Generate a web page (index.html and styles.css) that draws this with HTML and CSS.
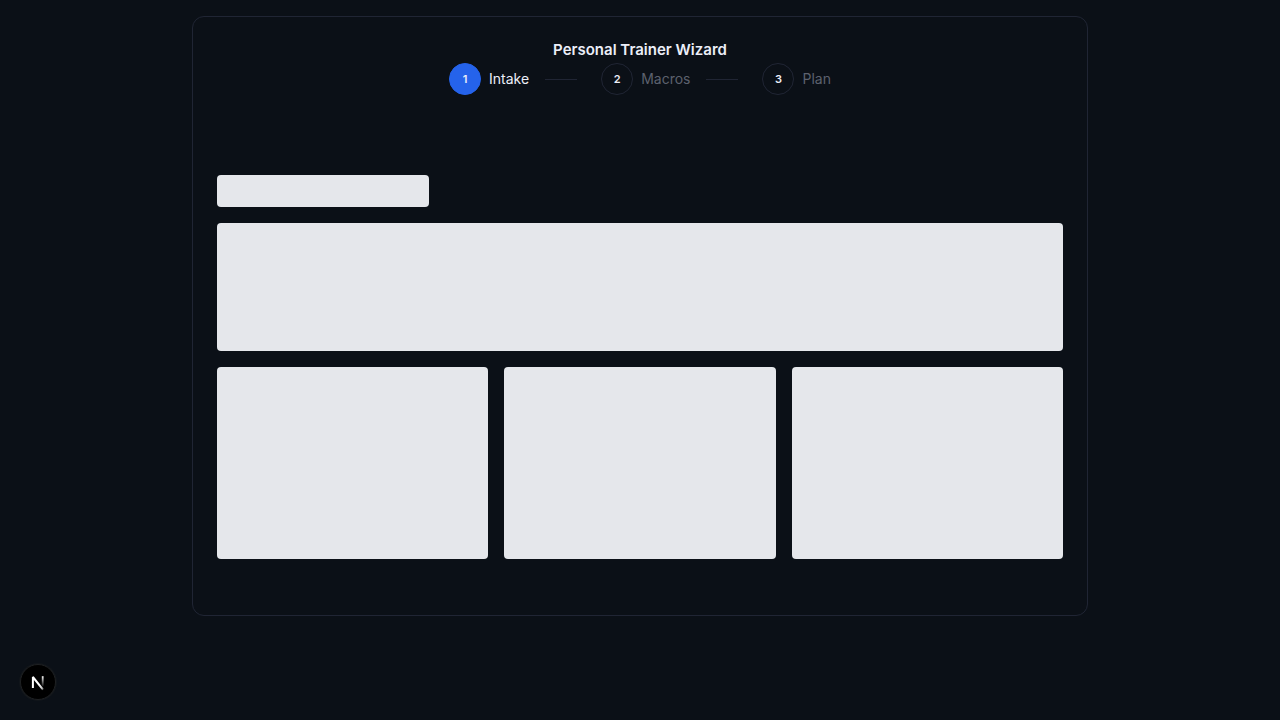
FILE: index.html
```html
<!DOCTYPE html>
<html lang="en">
<head>
<meta charset="utf-8">
<meta name="viewport" content="width=device-width, initial-scale=1">
<title>Personal Trainer Wizard</title>
<link rel="stylesheet" href="styles.css">
</head>
<body>
<main class="page">
  <section class="card">
    <header class="card-header">
      <h1 class="title">Personal Trainer Wizard</h1>
      <ol class="steps">
        <li class="step step-active" aria-current="step"><span class="step-number">1</span><span class="step-label">Intake</span><span class="step-line"></span></li>
        <li class="step"><span class="step-number">2</span><span class="step-label">Macros</span><span class="step-line"></span></li>
        <li class="step"><span class="step-number">3</span><span class="step-label">Plan</span></li>
      </ol>
    </header>
    <div class="loading" aria-busy="true">
      <div class="skeleton skeleton-heading"></div>
      <div class="skeleton skeleton-banner"></div>
      <div class="skeleton-grid">
        <div class="skeleton skeleton-tile"></div>
        <div class="skeleton skeleton-tile"></div>
        <div class="skeleton skeleton-tile"></div>
      </div>
    </div>
  </section>
</main>
<button class="dev-button" type="button" aria-label="Open Next.js Dev Tools">
  <svg width="20" height="20" viewBox="9 10 20 20" fill="none" aria-hidden="true">
    <defs>
      <linearGradient id="diagonal" x1="21" y1="22" x2="25" y2="28" gradientUnits="userSpaceOnUse"><stop stop-color="#fff"/><stop offset="0.6" stop-color="#fff" stop-opacity="0.8"/><stop offset="1" stop-color="#fff" stop-opacity="0.2"/></linearGradient>
      <linearGradient id="stem" x1="24" y1="14" x2="24" y2="25" gradientUnits="userSpaceOnUse"><stop stop-color="#fff"/><stop offset="1" stop-color="#fff" stop-opacity="0"/></linearGradient>
    </defs>
    <path d="M13.9 26V15L24 27.6" stroke="url(#diagonal)" stroke-width="2" stroke-linejoin="bevel"/>
    <path d="M23.7 14.2V24.5" stroke="url(#stem)" stroke-width="1.8"/>
  </svg>
</button>
</body>
</html>
```
FILE: styles.css
```css
* { box-sizing: border-box; }

body {
  margin: 0;
  background: #0b1017;
  color: #eceef8;
  font-family: Inter, "Liberation Sans", sans-serif;
}

.page {
  max-width: 928px;
  margin: 0 auto;
  padding: 16px;
}

.card {
  padding: 24px;
  border: 1px solid #202534;
  border-radius: 12px;
}

.card-header {
  display: flex;
  flex-direction: column;
  align-items: center;
  padding-bottom: 48px;
}

.title {
  margin: 0;
  padding-bottom: 4px;
  font-size: 15px;
  line-height: 18px;
  font-weight: 600;
}

.steps {
  display: flex;
  gap: 8px;
  margin: 0;
  padding: 0;
  list-style: none;
}

.step {
  display: flex;
  align-items: center;
  color: #5c616e;
  font-size: 14px;
  line-height: 20px;
  font-weight: 400;
}

.step-number {
  display: grid;
  place-items: center;
  width: 32px;
  height: 32px;
  margin-right: 8px;
  border: 1px solid #202534;
  border-radius: 50%;
  color: #eceef8;
  font-size: 11px;
  font-weight: 600;
}

.step-active { color: #eceef8; }

.step-active .step-number {
  border-color: #2563eb;
  background: #2563eb;
}

.step-line {
  width: 32px;
  height: 1px;
  margin: 0 16px;
  background: #202534;
}

.loading {
  display: flex;
  flex-direction: column;
  gap: 16px;
  padding: 32px 0;
}

.skeleton {
  border-radius: 4px;
  background: #e5e7eb;
}

.skeleton-heading {
  width: 25%;
  height: 32px;
}

.skeleton-banner { height: 128px; }

.skeleton-grid {
  display: grid;
  grid-template-columns: repeat(3, 1fr);
  gap: 16px;
}

.skeleton-tile { height: 192px; }

.dev-button {
  position: fixed;
  left: 20px;
  bottom: 20px;
  display: grid;
  place-items: center;
  width: 36px;
  height: 36px;
  padding: 0;
  border: 1px solid #1e2022;
  border-radius: 50%;
  background: #000;
  box-shadow: 0 0 0 1px #12161b;
}
```
